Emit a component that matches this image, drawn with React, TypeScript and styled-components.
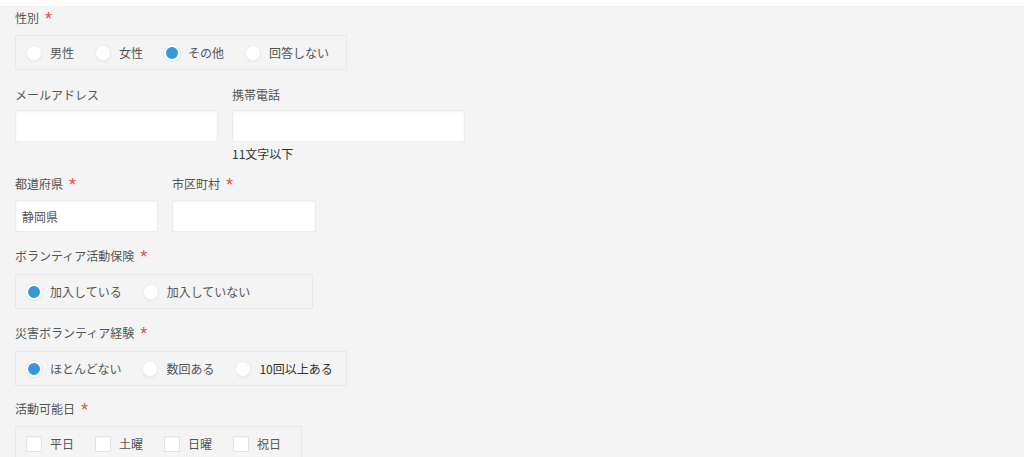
import React from 'react';
import styled, { createGlobalStyle } from 'styled-components';

const GlobalStyle = createGlobalStyle`
  html, body {
    margin: 0;
    padding: 0;
    background: #f4f4f4;
  }
  body {
    font-family: "Noto Sans CJK JP", "Noto Sans", sans-serif;
    font-size: 12px;
    color: #555;
  }
`

const TopStrip = styled.div`
  height: 7px;
  background: #fff;
  border-bottom: 1px solid #efefef;
  box-sizing: border-box;
`

const Form = styled.form`
  padding: 1px 0 0 15px;
  display: flex;
  flex-direction: column;
`

const Field = styled.div<{ gap?: number }>`
  display: flex;
  flex-direction: column;
  margin-bottom: ${props => (props.gap ?? 14)}px;
`

const Row = styled.div<{ gap?: number }>`
  display: flex;
  gap: 14px;
  margin-bottom: ${props => (props.gap ?? 14)}px;
`

const Label = styled.div<{ space?: number }>`
  height: 20px;
  line-height: 20px;
  display: flex;
  align-items: center;
  margin-bottom: ${props => (props.space ?? 7)}px;
  color: #555;
`

const Required = styled.span`
  color: #e74c3c;
  font-family: "Liberation Sans", sans-serif;
  font-size: 18px;
  line-height: 1;
  margin-left: 6px;
  position: relative;
  top: 1px;
`

const TextInput = styled.input<{ w: number }>`
  box-sizing: border-box;
  width: ${props => props.w}px;
  height: 32px;
  padding: 0 6px;
  border: 1px solid #ececec;
  background: #fff;
  box-shadow: inset 0 1px 3px rgba(0, 0, 0, 0.05);
  font-family: inherit;
  font-size: 12px;
  color: #555;
  outline: none;
`

const Hint = styled.div`
  margin-top: 4px;
  line-height: 16px;
  color: #333;
`

const ChoiceBox = styled.div<{ w: number }>`
  box-sizing: border-box;
  width: ${props => props.w}px;
  height: 35px;
  padding: 0 10px;
  border: 1px solid #e8e8e8;
  display: flex;
  align-items: center;
`

const Choice = styled.label`
  display: flex;
  align-items: center;
  margin-right: 21px;
  color: #555;
  line-height: 16px;
  white-space: nowrap;
`

const RadioMark = styled.span<{ checked?: boolean }>`
  box-sizing: border-box;
  width: 16px;
  height: 16px;
  border-radius: 50%;
  margin-right: 8px;
  background: ${props => (props.checked ? '#3498db' : '#fff')};
  border: ${props => (props.checked ? '2px solid #fff' : '1px solid #eeeeee')};
  box-shadow: 0 0 0 ${props => (props.checked ? 1 : 0)}px #e6e6e6, 0 1px 2px rgba(0, 0, 0, 0.05);
`

const CheckMark = styled.span`
  box-sizing: border-box;
  width: 16px;
  height: 16px;
  margin-right: 8px;
  background: #fff;
  border: 1px solid #e3e3e3;
  box-shadow: inset 0 1px 2px rgba(0, 0, 0, 0.04);
`

const Dark = styled.span`
  color: #333;
`

interface RadioProps {
  options: React.ReactNode[];
  selected: number;
  width: number;
}

const RadioGroup: React.FC<RadioProps> = ({ options, selected, width }) => (
  <ChoiceBox w={width}>
    {options.map((o, i) => (
      <Choice key={i}>
        <RadioMark checked={i === selected} />
        {o}
      </Choice>
    ))}
  </ChoiceBox>
)

const App: React.FC = () => (
  <>
    <GlobalStyle />
    <TopStrip />
    <Form>
      <Field gap={15}>
        <Label>性別<Required>*</Required></Label>
        <RadioGroup width={332} selected={2} options={['男性', '女性', 'その他', '回答しない']} />
      </Field>

      <Row gap={12}>
        <div>
          <Label space={5}>メールアドレス</Label>
          <TextInput w={203} />
        </div>
        <div>
          <Label space={5}>携帯電話</Label>
          <TextInput w={233} />
          <Hint>11文字以下</Hint>
        </div>
      </Row>

      <Row gap={14}>
        <div>
          <Label space={6}>都道府県<Required>*</Required></Label>
          <TextInput w={143} defaultValue="静岡県" />
        </div>
        <div>
          <Label space={6}>市区町村<Required>*</Required></Label>
          <TextInput w={144} />
        </div>
      </Row>

      <Field gap={14}>
        <Label space={8}>ボランティア活動保険<Required>*</Required></Label>
        <RadioGroup width={298} selected={0} options={['加入している', '加入していない']} />
      </Field>

      <Field gap={13}>
        <Label space={8}>災害ボランティア経験<Required>*</Required></Label>
        <RadioGroup
          width={332}
          selected={0}
          options={['ほとんどない', '数回ある', <Dark>10回以上ある</Dark>]}
        />
      </Field>

      <Field gap={0}>
        <Label space={7}>活動可能日<Required>*</Required></Label>
        <ChoiceBox w={287}>
          {['平日', '土曜', '日曜', '祝日'].map(d => (
            <Choice key={d}>
              <CheckMark />
              {d}
            </Choice>
          ))}
        </ChoiceBox>
      </Field>
    </Form>
  </>
)

export default App
